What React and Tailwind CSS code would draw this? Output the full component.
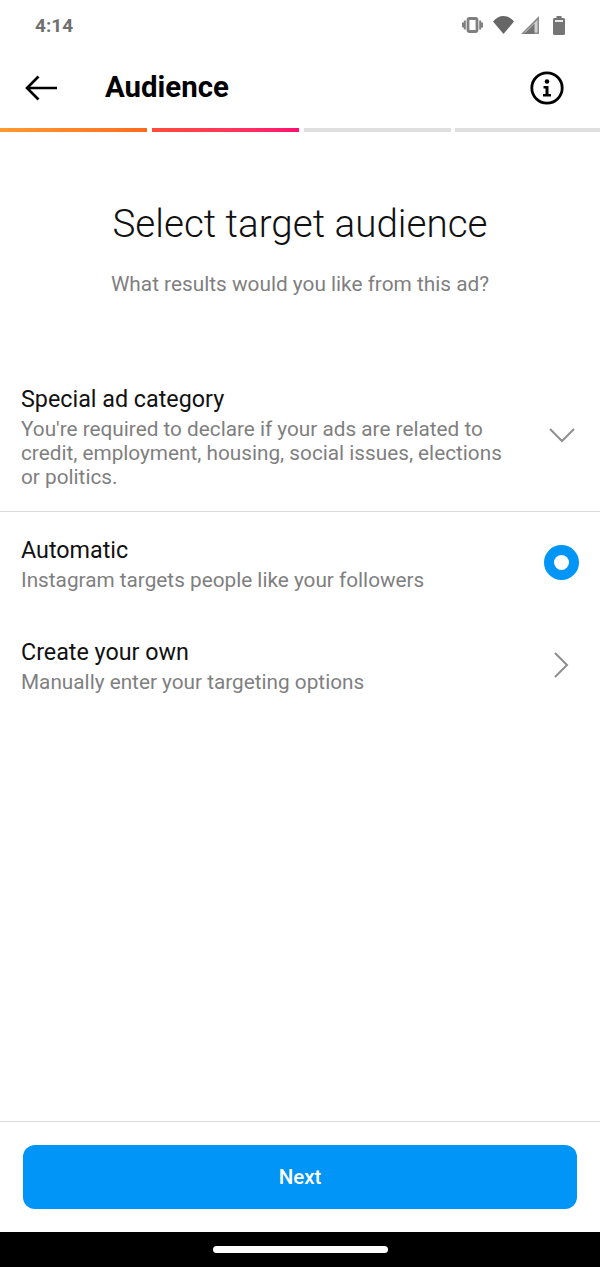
import React from "react";

const font = { fontFamily: "Roboto, sans-serif" };

function Row({ title, children, right, className = "" }) {
  return (
    <div className={`flex items-center justify-between pl-[21px] ${className}`}>
      <div className="w-[490px]">
        <div className="text-[23.300px] leading-[24px] text-[#111]">{title}</div>
        <div className="mt-[6px] text-[20.750px] leading-[24px] text-[#7f7f7f]">{children}</div>
      </div>
      {right}
    </div>
  );
}

export default function App() {
  return (
    <div className="flex h-[1267px] w-[600px] flex-col bg-white font-['Roboto',sans-serif]" style={font}>
      <div className="flex h-[50px] items-center justify-between pl-[35px] pr-[35px]">
        <span className="text-[19px] font-bold leading-none text-[#6f6f6f]">4:14</span>
        <div className="flex items-center">
          <svg width="21" height="16" viewBox="0 0 21 16" fill="none" stroke="#808080">
            <rect x="6" y="1.500" width="9" height="13" rx="1.500" strokeWidth="2.800" />
            <path d="M2.800 3.500v9M0.800 5.500v5M18.200 3.500v9M20.200 5.500v5" strokeWidth="2" />
          </svg>
          <svg className="ml-[10px]" width="21" height="18" viewBox="0 0 21 18" fill="#666">
            <path d="M0 5.500C3 2 6.500 0 10.500 0S18 2 21 5.500L10.500 18z" />
          </svg>
          <svg className="ml-[7px]" width="18" height="18" viewBox="0 0 18 18">
            <path d="M18 0v18H0z" fill="#8c8c8c" />
            <path d="M16.500 4V16.500H3.500z" fill="#d0d0d0" />
            <path d="M13.500 7.500V18H3z" fill="#757575" />
          </svg>
          <svg width="12" height="19" viewBox="0 0 12 19" fill="#757575" className="ml-[14px]">
            <path d="M3.500 0h5v2h2a1.500 1.500 0 0 1 1.500 1.500v14a1.500 1.500 0 0 1-1.500 1.500h-9A1.500 1.500 0 0 1 0 17.500v-14A1.500 1.500 0 0 1 1.500 2h2z" />
            <rect x="2" y="4" width="8" height="2" fill="#e8e8e8" />
          </svg>
        </div>
      </div>

      <div className="flex h-[78px] items-center pb-[2px] pl-[25px] pr-[36px]">
        <svg width="33" height="26" viewBox="0 0 33 26" fill="none" stroke="#000" strokeWidth="2.600">
          <path d="M32 13H2M13.500 1.500 2 13l11.500 11.500" />
        </svg>
        <div className="ml-[47px] flex-1 text-[29.400px] font-bold leading-none text-black">Audience</div>
        <svg width="34" height="34" viewBox="0 0 34 34" fill="none">
          <circle cx="17" cy="17" r="15.200" stroke="#000" strokeWidth="2.800" />
          <circle cx="17" cy="10.500" r="2.300" fill="#000" />
          <path d="M13.500 15h5v8h2.500v2.500h-8V23h2.500v-5.500h-2z" fill="#000" />
        </svg>
      </div>

      <div className="flex h-[4px] gap-[4.400px] overflow-hidden">
        <div className="w-[147.400px] shrink-0 bg-gradient-to-r from-[#ff9a2e] to-[#ff6a1f]" />
        <div className="w-[147.400px] shrink-0 bg-gradient-to-r from-[#ff4a3a] to-[#ff0f70]" />
        <div className="w-[147.400px] shrink-0 bg-[#dfdfdf]" />
        <div className="w-[147.400px] shrink-0 bg-[#dfdfdf]" />
      </div>

      <h1 className="mt-[69px] text-center text-[38.600px] font-light leading-[46px] text-[#111]">Select target audience</h1>
      <p className="mt-[25px] text-center text-[20.800px] leading-[24px] text-[#7f7f7f]">What results would you like from this ad?</p>

      <Row
        title="Special ad category"
        className="mt-[91px] pb-[22px]"
        right={
          <svg className="mr-[25px] mb-[7px]" width="26" height="16" viewBox="0 0 26 16" fill="none" stroke="#8e8e8e" strokeWidth="2">
            <path d="M1 2l12 12L25 2" />
          </svg>
        }
      >
        You're required to declare if your ads are related to credit, employment, housing, social issues, elections or politics.
      </Row>
      <div className="h-px bg-[#dbdbdb]" />

      <Row
        title="Automatic"
        className="mt-[26px]"
        right={
          <div className="mb-[5px] mr-[21px] flex h-[35px] w-[35px] items-center justify-center rounded-full bg-[#0095f6]">
            <div className="h-[15px] w-[15px] rounded-full bg-white" />
          </div>
        }
      >
        Instagram targets people like your followers
      </Row>

      <Row
        title="Create your own"
        className="mt-[48px]"
        right={
          <svg className="mb-[4px] mr-[30px]" width="17" height="26" viewBox="0 0 17 26" fill="none" stroke="#8e8e8e" strokeWidth="2">
            <path d="M2 1l12 12L2 25" />
          </svg>
        }
      >
        Manually enter your targeting options
      </Row>

      <div className="flex-1" />
      <div className="h-px bg-[#dbdbdb]" />
      <div className="px-[23px] pb-[23.500px] pt-[22.500px]">
        <button className="h-[64px] w-full rounded-[12px] bg-[#0095f6] pt-[2px] text-[20.500px] font-medium text-white">Next</button>
      </div>
      <div className="flex h-[35px] items-center justify-center bg-black pb-[1px]">
        <div className="h-[7px] w-[175px] rounded-full bg-white" />
      </div>
    </div>
  );
}
